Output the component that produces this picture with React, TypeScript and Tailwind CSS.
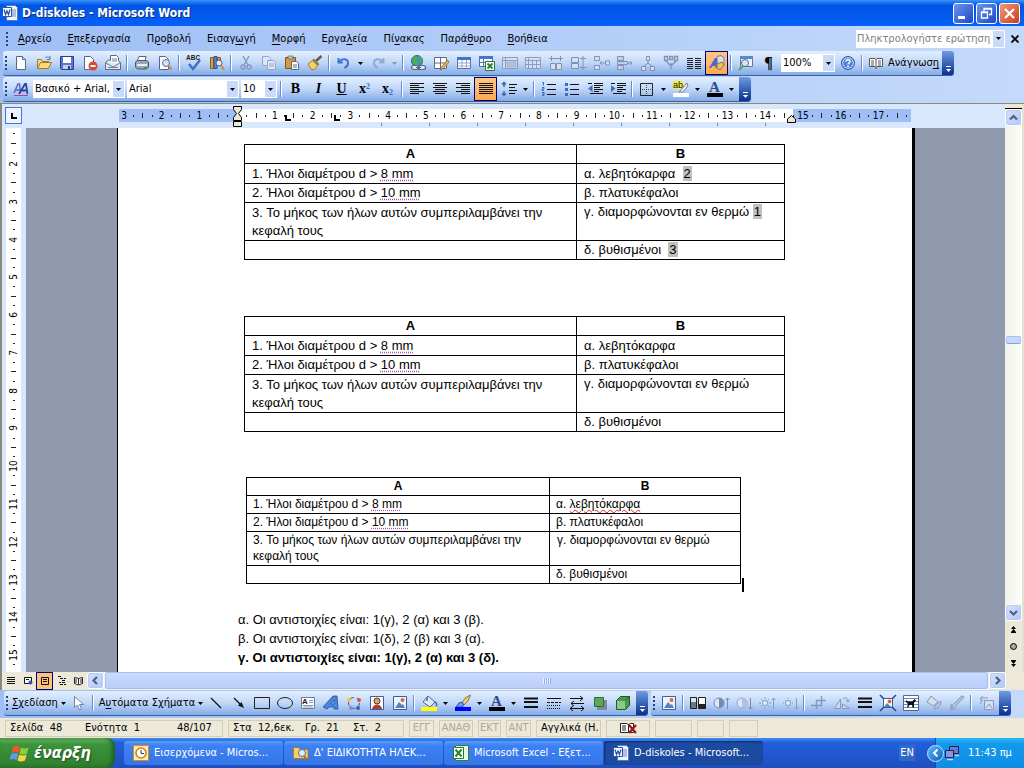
import { ReactNode } from "react";

const icons: Record<string, ReactNode> = {
  newDoc: <><path d="M3.5 1.5h6l3 3v10h-9z" fill="#fff" stroke="#53688f" /><path d="M9.5 1.5v3h3" fill="#cfdcf2" stroke="#53688f" /></>,
  open: <><path d="M1.5 13.5v-9h4l1 2h6v3" fill="#f7d878" stroke="#a1792b" /><path d="M1.5 13.5l3-6h11l-3 6z" fill="#ffd873" stroke="#a1792b" /><path d="M9 3c2-2 4-1 5 1m0-3v3.500h-3" fill="none" stroke="#4b77b8" /></>,
  save: <><path d="M1.500 1.500h13v13h-12l-1-1z" fill="#5b74d3" stroke="#2a3c8e" /><path d="M4 2h8v6H4z" fill="#fff" /><path d="M4 10h8v4H4z" fill="#c5cfea" /><path d="M9 11h2v3H9z" fill="#2a3c8e" /></>,
  permission: <><path d="M2.500 1.500h6l3 3v10h-9z" fill="#fff" stroke="#53688f" /><circle cx="11" cy="11" r="4.500" fill="#d84a27" /><path d="M8.500 10h5v2h-5z" fill="#fff" /></>,
  mail: <><path d="M5.500 .500h6l2 2v6h-8z" fill="#fff" stroke="#5c6a84" /><path d="M.500 7.500l3-2.500h9l3 2.500v7H.500z" fill="#e2e8f2" stroke="#5c6a84" /><path d="M6 1h5l2 2v5H6z" fill="#fff" /><path d="M1 8l7 4 7-4M7 4h5M7 6h5M3 12.500h10" fill="none" stroke="#6c7c9c" /></>,
  print: <><path d="M5 1.500h7l-1 5H3z" fill="#fff" stroke="#52627f" /><path d="M1.500 7l2-1.500h9l2 1.500v5l-2 2h-9l-2-2z" fill="#9aa7b8" stroke="#4a566b" /><path d="M3 9h10v2H3z" fill="#e8edf4" /><path d="M10 12h3v2h-3z" fill="#3c9b3c" /></>,
  preview: <><path d="M2.500 1.500h6l3 3v10h-9z" fill="#fff" stroke="#53688f" /><circle cx="9" cy="8" r="3.500" fill="#cfe5f7" stroke="#5b6f90" /><path d="M11.500 10.500l3 4" stroke="#c9892d" strokeWidth="2" /></>,
  spell: <><text x="0" y="5" fontSize="6.500" fontWeight="700" fill="#222" fontFamily="Liberation Sans, sans-serif">ABC</text><path d="M3 9l4 5 7-9" fill="none" stroke="#3f6fd0" strokeWidth="2.500" /></>,
  research: <><path d="M1.500 2.500h3v11h-3zM8.500 2.500h3v8h-3z" fill="#d9a13a" stroke="#8b5a1a" /><path d="M5 1.500h3v12H5z" fill="#5c83c4" stroke="#30508e" /><circle cx="10" cy="8" r="3" fill="#dcecf9" stroke="#50617f" /><path d="M12 10.500l3 4" stroke="#c9892d" strokeWidth="2" /></>,
  cut: <path d="M5 1l5 9M11 1l-5 9M5 10a2 2 0 1 0 .1 4 2 2 0 0 0 0-4M11 10a2 2 0 1 0 .1 4 2 2 0 0 0 0-4" fill="none" stroke="#8397bd" strokeWidth="1.400" />,
  copy: <><path d="M1.500 1.500h6l2 2v7h-8z" fill="#dde6f5" stroke="#95a5c7" /><path d="M6.500 5.500h6l2 2v7h-8z" fill="#dde6f5" stroke="#95a5c7" /><path d="M8 9h5M8 11h5" stroke="#95a5c7" /></>,
  paste: <><path d="M1.500 2.500h10v11h-10z" fill="#d69a37" stroke="#80561a" /><path d="M4 1h5v3H4z" fill="#b9bfca" stroke="#555" strokeWidth=".6" /><path d="M7.500 6.500h5l2 2v6h-7z" fill="#fff" stroke="#52689a" /><path d="M9 10h4M9 12h4" stroke="#52689a" /></>,
  painter: <><path d="M14.500 1L9 6" stroke="#6f5a3c" strokeWidth="2.500" /><path d="M1 9l6-5 5 5-5 6-3-1z" fill="#f4cf62" stroke="#a47e2b" /><path d="M6 5l5 5" stroke="#7c7c7c" strokeWidth="2" /></>,
  undo: <path d="M2.500 3v4.500H7M3 7c3-4 9-3.500 9 1 0 2.500-1.500 4-3.500 5" fill="none" stroke="#3f72ce" strokeWidth="2" />,
  redo: <path d="M13.500 3v4.500H9M13 7C10 3 4 3.500 4 8c0 2.500 1.500 4 3.500 5" fill="none" stroke="#93a9d2" strokeWidth="2" />,
  link: <><circle cx="7" cy="6" r="5.500" fill="#3f8bd8" stroke="#2c609e" /><path d="M3 2c3-2 5 0 4 2s2 3 1 6C4 11 1 7 3 2M9 1c3 1 5 5 2 7-2-1-3-4-2-7" fill="#4cb04a" /><path d="M3.500 10.500h4a2 2 0 0 1 0 4h-4a2 2 0 0 1 0-4M9.500 10.500h4a2 2 0 0 1 0 4h-4a2 2 0 0 1 0-4M6 12.500h5" fill="#dfe5ef" stroke="#56688c" strokeWidth="1.200" /></>,
  drawTable: <><path d="M1.500 2.500h12v11h-12zM7.500 2.500v11M1.500 8h12" fill="#fff" stroke="#5a6b8c" /><path d="M14.500 5l-6 7-1 3 3-1.500 5.500-6.500z" fill="#e9b54d" stroke="#935f20" strokeWidth=".8" /></>,
  table: <><path d="M1.500 2.500h13v11h-13z" fill="#fff" stroke="#4d6eb0" /><path d="M1 2h14v3H1z" fill="#4874c8" /><path d="M1.500 8h13M1.500 11h13M6 5v8.500M10.500 5v8.500" stroke="#93aad6" /></>,
  excelTable: <><path d="M.500 1.500h13v10H.500z" fill="#fff" stroke="#4d6eb0" /><path d="M0 1h14v3H0zM0 7h14v1H0zM4 4h1v8H4z" fill="#4874c8" /><path d="M6.500 6.500h9v9h-9z" fill="#fff" stroke="#2a7530" /><path d="M8.500 8.500l5 5m0-5l-5 5" stroke="#23892c" strokeWidth="2" /></>,
  gTable: <><path d="M.500 2.500h15v11H.500zM.500 5.500h15M3.500 2.500v11" fill="#d5dff0" stroke="#8b9cc0" /><path d="M5 7h9v5H5z" fill="#b4c1da" stroke="#8b9cc0" strokeWidth=".6" /></>,
  gGrid: <path d="M.500 2.500h15v11H.500zM.500 5.500h15M.500 9.500h15M3.500 2.500v11M7.500 5.500v8M11.500 5.500v8" fill="#d5dff0" stroke="#8b9cc0" />,
  gCols: <path d="M1 3.500h14M3.500 1v5M12.500 1v5M2.500 8.500h5v6h-5zM8.500 8.500h5v6h-5z" fill="#d5dff0" stroke="#8091b8" />,
  gRows: <path d="M.500 2.500h7v5h-7zM.500 8.500h7v5h-7zM12 1v14M9 3.500h6M9 12.500h6" fill="#d5dff0" stroke="#8091b8" />,
  gInsert: <path d="M.500 1.500h5v4h-5zM.500 10.500h5v4h-5zM11.500 6h4v4h-4zM6 8h5M8 6L6 8l2 2" fill="#d5dff0" stroke="#8091b8" />,
  gDelete: <path d="M.500 1.500h6v4h-6zM.500 10.500h6v4h-6zM.500 6.500h10v3H.500zM10 8h5M13 6l2 2-2 2" fill="#c3d0e8" stroke="#8091b8" />,
  gSplit: <path d="M6.500 1.500h3v4h-3zM8 6v3M8 8l-4 3M8 8l4 3M1.500 11.500h4v4h-4zM10.500 11.500h4v4h-4z" fill="#d5dff0" stroke="#8091b8" />,
  gMerge: <path d="M1.500 1.500h3v4h-3zM11.500 1.500h3v4h-3zM6.500 1.500h3v3h-3zM8 14V8M3 6l5 5 5-5" fill="none" stroke="#8091b8" strokeWidth="1.300" />,
  columns: <path d="M1 3.500h6M1 5.500h6M1 7.500h6M1 9.500h6M1 11.500h6M1 13.500h6M9 3.500h6M9 5.500h6M9 7.500h6M9 9.500h6M9 11.500h6M9 13.500h6" stroke="#222" />,
  drawing: <><path d="M8 1.500l4-1 3 2v7l-3 2-4-1z" fill="#d8dce4" stroke="#73809b" /><path d="M0 13L6 3h2l1 10H6.500v-2h-3L2 13z" fill="#5763c9" /><path d="M8 9l5-2 2 3-4 5-3-2z" fill="#e1c765" stroke="#8a763a" /></>,
  docMap: <><path d="M2.500 1.500h12v10h-12z" fill="#eef3fb" stroke="#6a7896" /><path d="M2 1h13v3H2z" fill="#5b87cf" /><circle cx="7" cy="8" r="3.500" fill="#d6e8f7" stroke="#516686" /><path d="M5 11l-4 4" stroke="#58a34c" strokeWidth="2" /></>,
  help: <><circle cx="8" cy="8" r="6.500" fill="#4f80da" stroke="#2c55a8" /><circle cx="8" cy="8" r="5.300" fill="none" stroke="#d7e4fb" /><path d="M6 6.500C6 4 10 4 10 6.500 10 8 8 8 8 9.500M8 10.500v1.500" fill="none" stroke="#fff" strokeWidth="1.500" /></>,
  book: <><path d="M1.500 3.500h5.500l1 1 1-1h5.500v8h-5.500l-1 1-1-1h-5.500z" fill="#fff" stroke="#555" /><path d="M8 4v10M3 6h3M3 8h3M3 10h3M10 6h3M10 8h3M10 10h3" stroke="#555" /></>,
  styles: <><path d="M1 12L5 3h1.500l1 9M3 9h5" fill="none" stroke="#5b66c9" strokeWidth="1.500" /><path d="M6 13l6-10h1l1.500 10M8.500 9.500h5" fill="none" stroke="#32439f" strokeWidth="1.800" /><path d="M1 14.500h14" stroke="#b04a7c" /></>,
  left: <path d="M1 2.500h14M1 4.500h9M1 6.500h14M1 8.500h9M1 10.500h14M1 12.500h9" stroke="#111" />,
  center: <path d="M1 2.500h14M3 4.500h10M1 6.500h14M3 8.500h10M1 10.500h14M3 12.500h10" stroke="#111" />,
  right: <path d="M1 2.500h14M6 4.500h9M1 6.500h14M6 8.500h9M1 10.500h14M6 12.500h9" stroke="#111" />,
  justify: <path d="M1 2.500h14M1 4.500h14M1 6.500h14M1 8.500h14M1 10.500h14M1 12.500h14" stroke="#111" />,
  spacing: <><path d="M3 1v5M3 10v5M1 3.500L3 1.500l2 2M1 12.500l2 2 2-2" fill="none" stroke="#3f6bbf" strokeWidth="1.600" /><path d="M8 3.500h8M8 6.500h6M8 9.500h8M8 12.500h6" stroke="#111" /></>,
  numbers: <><path d="M1 1.500h1.500v3M1 6.500h2v1.500H1v1.500h2M1 11.500h2v3H1M1 13h2" fill="none" stroke="#3f6bbf" /><path d="M6 3.500h9M6 8.500h9M6 13.500h9" stroke="#111" /></>,
  bullets: <><path d="M1 2h3v3H1zM1 7h3v3H1zM1 12h3v3H1z" fill="#3f6bbf" /><path d="M6 3.500h9M6 8.500h9M6 13.500h9" stroke="#111" /></>,
  outdent: <><path d="M1 2.500h4M7 2.500h9M7 4.500h9M7 6.500h6M7 8.500h9M7 10.500h5M3 12.500h13" stroke="#111" /><path d="M5.500 4v7L1 7.500z" fill="#3f6bbf" /></>,
  indent: <><path d="M1 2.500h4M7 2.500h9M7 4.500h9M7 6.500h6M7 8.500h9M7 10.500h5M3 12.500h13" stroke="#111" /><path d="M1 4v7l4.500-3.500z" fill="#3f6bbf" /></>,
  border: <><path d="M1.500 2.500h12v12h-12z" fill="none" stroke="#222" /><path d="M7.500 4v9M3 8.500h9" stroke="#445" strokeDasharray="1 1" /></>,
  highlight: <><path d="M0 0h10v8H0z" fill="#f5ee3c" /><text x="0" y="7" fontSize="9" fill="#111" fontFamily="Liberation Sans, sans-serif">ab</text><path d="M14 2L8 9l-2 2h4l5-6z" fill="#e7edf7" stroke="#72809c" /><path d="M0 12h16v4H0z" fill="#fff" /></>,
  fontColor: <><text x="2" y="11" fontSize="15" fontWeight="700" fill="#2c4a8e" fontFamily="Liberation Serif, serif">A</text><path d="M0 12h16v4H0z" fill="#000" /></>,
  pointer: <path d="M4.500 1.500v11l3-2.500 2 5 2-1-2-4.500h4z" fill="#fff" stroke="#7084a8" />,
  line: <path d="M3 3l10 10" stroke="#111" strokeWidth="1.200" />,
  arrow: <><path d="M3 3l8 8" stroke="#111" strokeWidth="1.200" /><path d="M13 13l-6-2.500L10.500 7z" fill="#111" /></>,
  rect: <path d="M.500 2.500h15v11H.500z" fill="none" stroke="#222" />,
  oval: <ellipse cx="8" cy="8" rx="7.500" ry="5.500" fill="none" stroke="#222" />,
  textbox: <><path d="M1.500 2.500h13v11h-13z" fill="#fff" stroke="#6b7c9c" /><text x="2" y="9" fontSize="8" fontWeight="700" fill="#222" fontFamily="Liberation Sans, sans-serif">A</text><path d="M9 5.500h4M9 7.500h4M3 10.500h10M3 12h10" stroke="#6b7c9c" strokeWidth=".8" /></>,
  wordart: <path d="M0 12L10 1h4l1 13h-4v-2H6l-2 2zM8 9h3V5z" fill="#4a86dd" fillRule="evenodd" stroke="#22509d" strokeWidth=".8" />,
  diagram: <><circle cx="8" cy="8" r="5.500" fill="none" stroke="#41557f" strokeDasharray="4 3" /><circle cx="3" cy="5" r="2" fill="#f0c33f" /><circle cx="13" cy="5" r="2" fill="#de5436" /><circle cx="5" cy="13" r="2" fill="#8d8ac4" /><circle cx="12" cy="13" r="2" fill="#3561bd" /></>,
  clip: <><path d="M1.500 1.500h13v13h-13z" fill="#fff" stroke="#3d5f9f" /><circle cx="8" cy="6" r="3" fill="#e2a16d" stroke="#5e3b23" /><path d="M3 14c1-6 9-6 10 0z" fill="#b63b2f" /></>,
  picture: <><path d="M1.500 1.500h13v13h-13z" fill="#edf4ff" stroke="#3d5f9f" /><path d="M3 13l4-6 3 3 1-1 2 4z" fill="#5a7fbe" /><circle cx="10.500" cy="5" r="2" fill="#e0692e" /></>,
  fill: <><path d="M7 1l7 6-5 5-7-5z" fill="#dfe7f3" stroke="#53688f" /><path d="M6 6V2M14 7c2 1 2 3 1 4" fill="none" stroke="#3f6bbf" strokeWidth="1.500" /><path d="M0 12h16v4H0z" fill="#ff0" /></>,
  brush: <><path d="M15.500 0L10 3 7 8l2 2 4-4z" fill="#f0c873" stroke="#7c6338" strokeWidth=".8" /><path d="M7 7l-3 1-3 4h6l2-2z" fill="#6aa0e8" stroke="#2d5397" /><path d="M0 12h16v4H0z" fill="#00f" /></>,
  lineStyle: <path d="M1 3.500h14M1 7h14M1 12h14" stroke="#111" strokeWidth="2" />,
  dashStyle: <><path d="M1 3.500h14" stroke="#111" /><path d="M1 7.500h14" stroke="#111" strokeDasharray="3 1" /><path d="M1 10.500h14M1 13.500h14" stroke="#111" strokeDasharray="1 1" /></>,
  arrowStyle: <path d="M1 3.500h13M11 1l3 2.500L11 6M15 8.500H2M5 6L2 8.500 5 11M1 13.500h14M4 11l-3 2.500L4 16M12 11l3 2.500-3 2.500" fill="none" stroke="#111" />,
  shadow: <><path d="M5 5h10v10H5z" fill="#7f8b9c" /><path d="M2.500 2.500h9v9h-9z" fill="#5aa65a" stroke="#2e6f35" /></>,
  cube: <><path d="M1.500 5.500l4-4h9v9l-4 4h-9z" fill="#4b984b" stroke="#23582b" /><path d="M2 6h8v8H2z" fill="#8ccb87" /><path d="M10.500 5.500l4-4" stroke="#23582b" /></>,
  colorMode: <><path d="M.500 2.500h6v11h-6z" fill="#6b7788" stroke="#222" /><path d="M1 3h5v4H1z" fill="#dfe6ef" /><path d="M8.500 2.500h7v11h-7z" fill="#fff" stroke="#222" /><path d="M8 9h8v5H8z" fill="#222" /></>,
  contrastUp: <><circle cx="6" cy="8" r="5" fill="#dce6f6" stroke="#768bb5" /><path d="M6 3v10a5 5 0 0 0 0-10" fill="#768bb5" /><path d="M14.500 14V3M12.500 5l2-2 2 2" fill="none" stroke="#768bb5" /></>,
  contrastDown: <><circle cx="6" cy="8" r="5" fill="#dce6f6" stroke="#8fa3c8" /><path d="M6 3v10a5 5 0 0 0 0-10" fill="#b3c2dd" /><path d="M14.500 3v11M12.500 12l2 2 2-2" fill="none" stroke="#768bb5" /></>,
  sunUp: <><circle cx="6" cy="8" r="2.500" fill="#e5edf9" stroke="#8699bf" /><path d="M6 2v2M6 12v2M0 8h2M10 8h2M2 4l1.500 1.500M10 4L8.500 5.500M2 12l1.500-1.500M10 12l-1.500-1.500M14.500 14V3M12.500 5l2-2 2 2" fill="none" stroke="#8699bf" /></>,
  sunDown: <><circle cx="6" cy="8" r="2.500" fill="#e5edf9" stroke="#8699bf" /><path d="M6 3v1M6 12v1M1 8h1M10 8h1M3 5l.5.5M9 5l-.5.5M3 11l.5-.5M9 11l-.5-.5M14.500 3v11M12.500 12l2 2 2-2" fill="none" stroke="#8699bf" /></>,
  crop: <path d="M5.500 14V5.500H15M0 10.500h10.500V1" fill="none" stroke="#8699bf" strokeWidth="1.500" />,
  rotate: <path d="M6.500 4v9.500h-6zM8.500 9v4.500h7zM9 4c2-3 5-1 5 3M12 5l2 2 1.500-2.500" fill="#cdd9ed" stroke="#8699bf" />,
  compress: <><path d="M3.500 3.500h9v9h-9z" fill="#fff" stroke="#3d5f9f" /><path d="M4 12l3-4 2 2 3 2z" fill="#5a7fbe" /><circle cx="9.500" cy="6.500" r="2" fill="#e0692e" /><path d="M0 0l4 4M16 0l-4 4M0 16l4-4M16 16l-4-4" stroke="#2a4b94" strokeWidth="1.600" /></>,
  wrap: <><path d="M.500 .500h15v15H.500z" fill="#fff" stroke="#55698f" /><path d="M1 3.500h14M1 6.500h14M1 9.500h14M1 12.500h14" stroke="#7088b4" /><path d="M3 5l2 1.500h4L11.500 4 13 5.500 11 8v4.500H9.500L9 10H6.500L5 12.500H4L5 9 3 7z" fill="#111" /></>,
  gFill: <><path d="M5 1l7 6-5 4-6-4z" fill="#d5dff0" stroke="#8699bf" /><path d="M15 6c0 4-3 8-7 8 1-4 3-6 7-8" fill="#b9c7e0" stroke="#8699bf" /></>,
  gPen: <path d="M15 2L6 11l-4 3 2-5M15 2l-2-1-8 8M2 9v5h5" fill="#d5dff0" stroke="#8fa2c6" strokeWidth="1.300" />,
  reset: <><path d="M6.500 5.500h9v9h-9z" fill="#d5dff0" stroke="#8699bf" /><path d="M8 13l3-4 3 4M10 3H3M5 1L2 3.500 5 6M3 4v5" fill="none" stroke="#8699bf" /></>,
  word: <><path d="M4.500 .500h9l2 2v13h-11z" fill="#eef4ff" stroke="#5677b9" /><path d="M10 5h4M10 7h4M10 9h4M10 11h4" stroke="#6f8dc8" /><path d="M.500 2.500h9v9h-9z" fill="#fff" stroke="#2a55a8" /><path d="M2 4.500l1.500 5L5 6l1.500 3.500 1.500-5" fill="none" stroke="#2a55a8" strokeWidth="1.300" /></>,
  outlook: <><path d="M.500 .500h15v15H.500z" fill="#ffe9b0" stroke="#d38c1c" /><circle cx="8" cy="8" r="5" fill="#fff" stroke="#c78320" strokeWidth="1.600" /><path d="M8 5v3.500h3" fill="none" stroke="#333" /></>,
  folder: <><path d="M.500 13.500v-11h5l1.500 2h8v9z" fill="#f7cf61" stroke="#b17d1c" /><circle cx="9" cy="8" r="3.500" fill="#dceefb" stroke="#496fa5" /><path d="M11 11l3 4" stroke="#a96d26" strokeWidth="2" /></>,
  excel: <><path d="M2.500 .500h13v15h-13z" fill="#e6f4e4" stroke="#387d3c" /><path d="M.500 2.500h10v11H.500z" fill="#fff" stroke="#257a2c" /><path d="M2.500 4.500l6 7m0-7l-6 7" stroke="#1e8a2a" strokeWidth="2" /></>,
  normalView: <path d="M4 4.500h8M4 6.500h8M4 8.500h8M4 10.500h8" stroke="#111" />,
  webView: <><path d="M4.500 4.500h7v6h-7z" fill="#fff" stroke="#111" /><circle cx="10.500" cy="9.500" r="2" fill="#3456b8" /><path d="M6 6.500h3" stroke="#111" /></>,
  printView: <path d="M4.500 4.500h7v7h-7zM6 6.500h4M6 8.500h4" fill="none" stroke="#111" />,
  outlineView: <path d="M4 3.500h4M6 5.500h6M8 7.500h4M5 9.500h2M8 9.500h4M6 11.500h6" stroke="#111" strokeDasharray="3 1" />,
  readView: <path d="M3.500 4.500l4 1 4-1v6l-4 1.500-4-1.500zM7.500 5.500v6M4 7h2M9 7h2M4 9h2M9 9h2" fill="#fff" stroke="#222" />,
  spellStatus: <><path d="M.500 3.500h6l2 1v8h-8zM8.500 4.500l2-1h3v9h-5z" fill="#fff" stroke="#222" /><path d="M2 6h4M2 8h4M2 10h4" stroke="#222" /><path d="M9 5l7 8M16 5l-7 8" stroke="#a3161b" strokeWidth="2.400" /></>,
  network: <><path d="M5.500 1.500h9v7h-9z" fill="#6a79d6" stroke="#20244f" /><path d="M1.500 5.500h8v7h-8z" fill="#8794e8" stroke="#20244f" /><path d="M3 14.500h6M11 10.500h4" stroke="#cfd4ea" strokeWidth="1.500" /></>,
};

const Icon = ({ name }: { name: string }) => (
  <svg viewBox="0 0 16 16" className="size-4 shrink-0 overflow-visible" aria-hidden="true">{icons[name]}</svg>
);

const Tri = ({ dim = false }: { dim?: boolean }) => (
  <svg viewBox="0 0 5 3" className={dim ? "h-[3px] w-[5px] text-[#8a94a8]" : "h-[3px] w-[5px]"} aria-hidden="true">
    <path d="M0 0h5L2.500 3z" fill="currentColor" />
  </svg>
);

// "Αρ_χείο" style markup: the letter after "_" is the accelerator
const Label = ({ text }: { text: string }) => {
  const [before, rest = ""] = text.split("_");
  return (
    <span className="whitespace-nowrap">
      {before}
      <span className="underline underline-offset-2">{rest.slice(0, 1)}</span>
      {rest.slice(1)}
    </span>
  );
};

const Grip = () => (
  <span className="flex w-[6px] shrink-0 flex-col items-center justify-center gap-[2px]">
    {[0, 1, 2, 3].map((n) => (
      <span key={n} className="size-[2px] bg-[#27418a]" />
    ))}
  </span>
);

const Sep = () => (
  <span className="flex w-[6px] shrink-0 items-center justify-center">
    <span className="h-4 w-[2px] border-r border-white bg-[#6a8ccb]" />
  </span>
);

const EndCap = () => (
  <button aria-label="Επιλογές" className="flex w-3 shrink-0 flex-col items-center justify-end gap-[2px] rounded-r-[3px] bg-gradient-to-b from-[#6f9be3] to-[#0a2f8d] pb-[3px] text-white">
    <span className="h-px w-[5px] bg-white" />
    <Tri />
  </button>
);

const Tool = ({ name, on = false }: { name: string; on?: boolean }) => (
  <button
    aria-label={name}
    className={
      on
        ? "flex w-[23px] shrink-0 items-center justify-center border border-[#000080] bg-gradient-to-b from-[#ffc583] to-[#ffa94d]"
        : "flex w-[23px] shrink-0 items-center justify-center"
    }
  >
    <Icon name={name} />
  </button>
);

const Drop = ({ dim = false }: { dim?: boolean }) => (
  <button aria-label="Περισσότερα" className="flex w-[11px] shrink-0 items-center justify-center">
    <Tri dim={dim} />
  </button>
);

const Glyph = ({ text, label, className }: { text: ReactNode; label: string; className: string }) => (
  <button aria-label={label} className={`w-[23px] shrink-0 text-center font-['Liberation_Serif',serif] leading-6 ${className}`}>
    {text}
  </button>
);

const Combo = ({ value, label, width }: { value: string; label: string; width: string }) => (
  <span className={`relative mx-px my-[3px] flex shrink-0 bg-white ${width}`}>
    <select aria-label={label} className="w-full appearance-none bg-transparent pr-3 pl-[2px] text-[11px]">
      <option>{value}</option>
    </select>
    <span className="pointer-events-none absolute inset-y-px right-px flex w-[11px] items-center justify-center bg-[#c8dafa]">
      <Tri />
    </span>
  </span>
);

// "|" separator, "v" drop arrow, "w" greyed drop arrow
const Tools = ({ items }: { items: string[] }) => (
  <>
    {items.map((item, i) => {
      if (item === "|") return <Sep key={i} />;
      if (item === "v" || item === "w") return <Drop key={i} dim={item === "w"} />;
      return <Tool key={i} name={item.replace("*", "")} on={item.endsWith("*")} />;
    })}
  </>
);

const Toolbar = ({ children }: { children: ReactNode }) => (
  <div className="flex h-[25px] shrink-0 rounded-[3px] border-b border-[#3b619c] bg-gradient-to-b from-[#e3effe] via-[#c0d7f8] to-[#83abe6]">
    {children}
    <EndCap />
  </div>
);

const standardTools = [
  "newDoc", "open", "save", "permission", "mail", "|", "print", "preview", "|", "spell", "research", "|",
  "cut", "copy", "paste", "painter", "|", "undo", "v", "redo", "w", "|",
  "link", "drawTable", "table", "excelTable", "gTable", "gGrid", "gCols", "gRows", "gInsert", "gDelete",
  "gSplit", "gMerge", "columns", "drawing*", "|", "docMap",
];

const menus = ["_Αρχείο", "_Επεξεργασία", "Π_ροβολή", "Εισαγ_ωγή", "_Μορφή", "Εργα_λεία", "Πί_νακας", "Παρά_θυρο", "_Βοήθεια"];

const TitleBar = () => (
  <header className="flex h-[26px] shrink-0 items-center gap-1 bg-gradient-to-b from-[#3a93ff] via-[#0054e3] via-20% to-[#0660fa] pr-1 pl-[2px]">
    <Icon name="word" />
    <h1 className="flex-1 font-['DejaVu_Sans_Condensed','DejaVu_Sans',sans-serif] text-[12px] font-bold text-white [text-shadow:1px_1px_#0f2b7a]">
      D-diskoles - Microsoft Word
    </h1>
    <div className="flex gap-[2px]">
      <button aria-label="Ελαχιστοποίηση" className="size-[21px] rounded-[3px] border border-white bg-gradient-to-br from-[#6d94f0] to-[#1b46c6]">
        <svg viewBox="0 0 19 19"><path d="M4 12h7v3H4z" fill="#fff" /></svg>
      </button>
      <button aria-label="Επαναφορά" className="size-[21px] rounded-[3px] border border-white bg-gradient-to-br from-[#6d94f0] to-[#1b46c6]">
        <svg viewBox="0 0 19 19"><path d="M7 7V4.500h7.500v6H12M4.500 8h6v6h-6zM4 8.500h7M7 5h7" fill="none" stroke="#fff" strokeWidth="1.300" /></svg>
      </button>
      <button aria-label="Κλείσιμο" className="size-[21px] rounded-[3px] border border-white bg-gradient-to-br from-[#f0977a] to-[#cc3810]">
        <svg viewBox="0 0 19 19"><path d="M5 5l9 9M14 5l-9 9" stroke="#fff" strokeWidth="2.200" /></svg>
      </button>
    </div>
  </header>
);

const MenuBar = () => (
  <nav className="flex h-[25px] shrink-0 items-center pl-1">
    <span className="flex h-full"><Grip /></span>
    {menus.map((menu) => (
      <button key={menu} className="px-2">
        <Label text={menu} />
      </button>
    ))}
    <label className="ml-auto flex h-[18px] bg-white">
      <input aria-label="Ερώτηση" placeholder="Πληκτρολογήστε ερώτηση" className="w-[137px] pl-px text-[11px] placeholder:text-[#808080]" />
      <span className="my-px mr-px flex w-[11px] items-center justify-center bg-[#c8dafa]"><Tri /></span>
    </label>
    <button aria-label="Κλείσιμο εγγράφου" className="flex w-[19px] justify-center">
      <svg viewBox="0 0 8 8" className="size-2"><path d="M.500 .500l7 7m0-7l-7 7" stroke="#000" strokeWidth="1.800" /></svg>
    </button>
  </nav>
);

const Marks = ({ vertical = false }: { vertical?: boolean }) => {
  const cell = "flex flex-1 items-center justify-center";
  return (
    <>
      <span className={cell}><span className={vertical ? "h-px w-[2px] bg-[#222]" : "h-[2px] w-px bg-[#222]"} /></span>
      <span className={cell}><span className={vertical ? "h-px w-[5px] bg-[#222]" : "h-[5px] w-px bg-[#222]"} /></span>
      <span className={cell}><span className={vertical ? "h-px w-[2px] bg-[#222]" : "h-[2px] w-px bg-[#222]"} /></span>
    </>
  );
};

const rulerNumbers = [3, 2, 1, 0, ...Array.from({ length: 17 }, (_, i) => i + 1)];

const TabStop = () => (
  <svg viewBox="0 0 6 6" className="size-[6px]"><path d="M1 0v5h5" fill="none" stroke="#000" strokeWidth="2" /></svg>
);

const HRuler = () => (
  <div className="flex h-6 shrink-0 bg-[#d8e7fc] pl-[3px]">
    <button aria-label="Στηλοθέτης" className="mt-[3px] flex size-[17px] shrink-0 items-center justify-center border border-[#4874cf] bg-[#edf4ff]">
      <TabStop />
    </button>
    <div className="relative mt-[5px] ml-[97px] flex h-[13px] w-[792px] shrink-0">
      <div className="absolute inset-0 flex">
        <span className="w-[118px] bg-[#9ebef5]" />
        <span className="flex-1 bg-white" />
        <span className="w-[118px] bg-[#9ebef5]" />
      </div>
      <div className="relative flex flex-1 text-[10px] leading-[13px]">
        {rulerNumbers.map((n, i) => (
          <span key={i} className="flex min-w-0 flex-1">
            <span className="flex w-[10px] shrink-0 justify-center">{n || ""}</span>
            <Marks />
          </span>
        ))}
      </div>
      {/* default tab positions */}
      <div className="absolute top-[14px] left-[262px] flex gap-[47px]">
        {Array.from({ length: 9 }, (_, i) => (
          <span key={i} className="h-[3px] w-px bg-[#7c8799]" />
        ))}
      </div>
      <svg viewBox="0 0 9 22" className="absolute -top-[3px] left-[114px] h-[22px] w-[9px]">
        <path d="M.500 .500h8v3l-3 4 3 4v3h-8v-3l3-4-3-4zM.500 15.500h8v5h-8z" fill="#ece9d8" stroke="#000" />
      </svg>
      <span className="absolute top-[6px] left-[166px]"><TabStop /></span>
      <span className="absolute top-[6px] left-[215px]"><TabStop /></span>
      <svg viewBox="0 0 9 8" className="absolute top-[6px] left-[668px] h-2 w-[9px]">
        <path d="M.500 7.500V4l4-3.500L8.500 4v3.500z" fill="#ece9d8" stroke="#000" />
      </svg>
    </div>
  </div>
);

const VRuler = () => (
  <div className="w-6 shrink-0 bg-[#d8e7fc] pr-[5px] pl-1">
    <div className="flex flex-col bg-white text-[10px]">
      <div className="flex h-[31px] shrink-0 flex-col"><Marks vertical /></div>
      <div className="flex h-[529px] shrink-0 flex-col">
        {Array.from({ length: 14 }, (_, i) => (
          <span key={i} className="flex min-h-0 flex-1 flex-col">
            <span className="flex h-[10px] shrink-0 items-center justify-center">
              <span className="-rotate-90">{i + 2}</span>
            </span>
            <Marks vertical />
          </span>
        ))}
      </div>
    </div>
  </div>
);

const Units = ({ children }: { children: string }) => (
  <span className="underline decoration-[#b04fc4] decoration-dotted underline-offset-2">{children}</span>
);

const Mark = ({ children }: { children: string }) => <mark className="bg-[#c0c0c0] px-px text-black">{children}</mark>;

type MatchTableProps = { small?: boolean; answers?: string[]; className: string };

const MatchTable = ({ small = false, answers, className }: MatchTableProps) => {
  const cell = small ? "border border-black px-[6px] align-top" : "border border-black px-[7px] align-bottom";
  const row = small ? "h-[18px]" : "h-[19px]";
  return (
    <table className={`table-fixed border-collapse ${className}`}>
      <colgroup>
        <col className={small ? "w-[303px]" : "w-[332px]"} />
        <col />
      </colgroup>
      <thead>
        <tr className={row}>
          <th className={cell}>A</th>
          <th className={cell}>B</th>
        </tr>
      </thead>
      <tbody>
        <tr className={small ? row : "h-5"}>
          <td className={cell}>1. Ήλοι διαμέτρου d &gt; <Units>8 mm</Units></td>
          <td className={cell}>
            α. {small ? <span className="underline decoration-[#e02020] decoration-wavy decoration-1">λεβητόκαρφα</span> : "λεβητόκαρφα"}
            {answers && <>&nbsp; <Mark>{answers[0]}</Mark></>}
          </td>
        </tr>
        <tr className={row}>
          <td className={cell}>2. Ήλοι διαμέτρου d &gt; <Units>10 mm</Units></td>
          <td className={cell}>β. πλατυκέφαλοι</td>
        </tr>
        <tr className={small ? "h-[34px]" : "h-[38px]"}>
          <td className={cell}>3. Το μήκος των ήλων αυτών συμπεριλαμβάνει την {small && <br />}κεφαλή τους</td>
          <td className="border border-black px-[7px] align-top">γ. διαμορφώνονται εν θερμώ {answers && <Mark>{answers[1]}</Mark>}</td>
        </tr>
        <tr className={row}>
          <td className={cell}></td>
          <td className={cell}>δ. βυθισμένοι {answers && <>&nbsp;<Mark>{answers[2]}</Mark></>}</td>
        </tr>
      </tbody>
    </table>
  );
};

const Page = () => (
  <article className="ml-[91px] w-[798px] shrink-0 border-r-[3px] border-l border-black bg-white pt-4 pl-[120px] font-['Liberation_Sans',Arial,sans-serif] text-[13px] leading-[18px]">
    <MatchTable className="ml-[6px] w-[541px]" answers={["2", "1", "3"]} />
    <MatchTable className="mt-14 ml-[6px] w-[541px]" />
    <div className="mt-[45px] ml-2 flex items-end gap-px">
      <MatchTable className="w-[495px] text-[12px] leading-4" small />
      <span className="-mb-2 h-[14px] w-[2px] bg-black" />
    </div>
    <div className="mt-[26px] leading-[19px]">
      <p>α. Οι αντιστοιχίες είναι: 1(γ), 2 (α) και 3 (β).</p>
      <p>β. Οι αντιστοιχίες είναι: 1(δ), 2 (β) και 3 (α).</p>
      <p className="font-bold">γ. Οι αντιστοιχίες είναι: 1(γ), 2 (α) και 3 (δ).</p>
    </div>
  </article>
);

const ScrollButton = ({ label, d }: { label: string; d: string }) => (
  <button aria-label={label} className="flex size-[17px] shrink-0 items-center justify-center rounded-[3px] border border-white bg-gradient-to-br from-[#d5e1fe] to-[#b3c8f7] shadow-[inset_0_0_0_1px_#b5c9f3]">
    <svg viewBox="0 0 9 9" className="size-[9px]"><path d={d} fill="none" stroke="#4d6185" strokeWidth="2.200" /></svg>
  </button>
);

const VScroll = () => (
  <div className="flex w-[19px] shrink-0 flex-col border-r-[2px] border-[#e4e1d2] bg-[#ece9d8]">
    <span className="h-[5px] border-b border-black bg-[#ece9d8]" />
    <ScrollButton label="Επάνω" d="M1 6.500L4.500 3 8 6.500" />
    <div className="flex-1 bg-gradient-to-r from-[#f1f0e9] to-[#fefefb]">
      <div className="h-[44%]" />
      <div className="mx-px h-2 rounded-[2px] border border-[#a9c0f2] border-b-[#7fa0e4] bg-[#c6d6fc]" />
    </div>
    <ScrollButton label="Κάτω" d="M1 3L4.500 6.500 8 3" />
    <div className="flex h-[51px] shrink-0 flex-col items-center justify-around">
      <svg viewBox="0 0 7 7" className="size-[7px]"><path d="M3.500 0L6 3H1zM3.500 3L6 6H1zM1 6h5v1H1z" /></svg>
      <span className="size-[7px] rounded-full border border-black bg-[#a9a99c]" />
      <svg viewBox="0 0 7 7" className="size-[7px]"><path d="M3.500 7L6 4H1zM3.500 4L6 1H1zM1 0h5v1H1z" /></svg>
    </div>
  </div>
);

const ViewBar = () => (
  <div className="flex h-[18px] shrink-0 bg-[#ece9d8] pr-[18px]">
    <div className="flex w-[85px] shrink-0 pr-px">
      {["normalView", "webView", "printView", "outlineView", "readView"].map((view) => (
        <button
          key={view}
          aria-label={view}
          className={
            view === "printView"
              ? "flex w-[17px] shrink-0 items-center justify-center border border-[#000080] bg-[#ffc177]"
              : "flex w-[17px] shrink-0 items-center justify-center"
          }
        >
          <Icon name={view} />
        </button>
      ))}
    </div>
    <ScrollButton label="Αριστερά" d="M6 1L2.500 4.500 6 8" />
    <div className="flex flex-1 bg-[#f5f4ee] px-px pb-px">
      <div className="flex flex-1 items-center justify-center gap-px rounded-[2px] border border-[#a4bdf0] bg-gradient-to-b from-[#cbdafd] to-[#bacefa]">
        {[0, 1, 2, 3].map((n) => (
          <span key={n} className="h-[6px] w-px bg-[#eef4fe] shadow-[1px_0_#8cb0f8]" />
        ))}
      </div>
    </div>
    <ScrollButton label="Δεξιά" d="M3 1l3.500 3.500L3 8" />
  </div>
);

const DrawingBars = () => (
  <div className="flex h-7 shrink-0 gap-[3px] bg-gradient-to-r from-[#9ebef5] to-[#c4dafa] pt-px pl-1">
    <Toolbar>
      <Grip />
      <button className="flex items-center gap-[3px] pr-px pl-[2px]"><Label text="_Σχεδίαση" /><Tri /></button>
      <Tools items={["pointer", "|"]} />
      <button className="flex items-center gap-[3px] pr-px pl-[3px]"><Label text="Α_υτόματα Σχήματα" /><Tri /></button>
      <Tools
        items={["line", "arrow", "rect", "oval", "textbox", "wordart", "diagram", "clip", "picture", "|", "fill", "v", "brush", "v", "fontColor", "v", "lineStyle", "dashStyle", "arrowStyle", "shadow", "cube"]}
      />
      <span className="w-[2px]" />
    </Toolbar>
    <Toolbar>
      <Grip />
      <Tools
        items={["picture", "|", "colorMode", "contrastUp", "contrastDown", "sunUp", "sunDown", "|", "crop", "rotate", "lineStyle", "compress", "wrap", "gFill", "gPen", "|", "reset"]}
      />
      <span className="w-[2px]" />
    </Toolbar>
  </div>
);

const panel = "flex h-[17px] items-center border border-[#d2cebb] px-1";

const StatusBar = () => (
  <footer className="flex h-5 shrink-0 items-center gap-[5px] bg-[#ece9d8] pl-[5px] whitespace-nowrap">
    <div className={`${panel} w-[218px]`}>
      <span className="w-[75px]">Σελίδα&nbsp; 48</span>
      <span className="w-[92px]">Ενότητα&nbsp; 1</span>
      <span>48/107</span>
    </div>
    <div className={`${panel} w-[176px]`}>
      <span className="w-[72px]">Στα&nbsp; 12,6εκ.</span>
      <span className="w-12">Γρ.&nbsp; 21</span>
      <span>Στ.&nbsp; 2</span>
    </div>
    <div className="flex gap-[5px] text-[#aca899]">
      <span className={`${panel} w-[25px] justify-center`}>ΕΓΓ</span>
      <span className={`${panel} w-[34px] justify-center`}>ΑΝΑΘ</span>
      <span className={`${panel} w-[23px] justify-center`}>ΕΚΤ</span>
      <span className={`${panel} w-[25px] justify-center`}>ΑΝΤ</span>
    </div>
    <span className={`${panel} w-[65px]`}>Αγγλικά (Η.</span>
    <span className={`${panel} w-11 justify-center`}><Icon name="spellStatus" /></span>
    <span className={`${panel} w-[37px]`} />
    <span className={`${panel} w-[27px]`} />
    <span className={`${panel} w-[29px]`} />
  </footer>
);

const tasks = [
  { icon: "outlook", title: "Εισερχόμενα - Micros..." },
  { icon: "folder", title: "Δ' ΕΙΔΙΚΟΤΗΤΑ ΗΛΕΚ..." },
  { icon: "excel", title: "Microsoft Excel - Εξετ..." },
  { icon: "word", title: "D-diskoles - Microsoft...", active: true },
];

const Taskbar = () => (
  <div className="flex h-[30px] shrink-0 bg-gradient-to-b from-[#3f8cf3] via-[#245edb] via-15% to-[#1d4fc0] text-white">
    <button className="flex w-[115px] shrink-0 items-center gap-1 rounded-r-lg bg-gradient-to-b from-[#6fbf6c] via-[#3c943c] via-20% to-[#2f7f2f] pl-[10px] shadow-[inset_-3px_0_4px_#1f5f20]">
      <svg viewBox="0 0 20 18" className="h-[18px] w-5 shrink-0">
        <path d="M3 3q4-2.500 7 0L8.500 9q-4-2-7 0z" fill="#f0562c" />
        <path d="M11 3.500q4 2 7.500 0L17 9.500q-4 2-7.500 0z" fill="#8cd13c" />
        <path d="M1.200 10q3.500-2 7 0L6.500 16q-3.500-2-7 0z" fill="#5b9bf5" />
        <path d="M9.200 10.500q4 2 7.500 0L15 16.500q-4 2-7.500 0z" fill="#fbd33c" />
      </svg>
      <span className="text-[16px] leading-6 font-bold italic [text-shadow:1px_1px_2px_#1b4d1c]">έναρξη</span>
    </button>
    <div className="ml-[9px] flex min-w-0 flex-1 gap-px py-[3px] pr-32">
      {tasks.map((task) => (
        <button
          key={task.title}
          className={
            task.active
              ? "flex min-w-0 max-w-[159px] flex-1 items-center gap-[5px] rounded-[3px] bg-[#1b4a9f] px-[9px] whitespace-nowrap shadow-[inset_1px_1px_2px_#102f70]"
              : "flex min-w-0 max-w-[159px] flex-1 items-center gap-[5px] rounded-[3px] bg-gradient-to-b from-[#5a9bfa] via-[#3c81f3] via-20% to-[#3575e8] px-[9px] whitespace-nowrap"
          }
        >
          <Icon name={task.icon} />
          <span>{task.title}</span>
        </button>
      ))}
    </div>
    <button className="my-auto mr-[5px] h-4 w-4 shrink-0 bg-[#316ac5] text-center">EN</button>
    <div className="ml-[15px] flex w-[89px] shrink-0 items-center border-l border-[#0b4fae] bg-gradient-to-b from-[#2bb4f5] via-[#119aec] via-20% to-[#0f8de4]">
      <button aria-label="Εμφάνιση εικονιδίων" className="-ml-[9px] flex size-[17px] shrink-0 items-center justify-center rounded-full border border-[#bfe6ff] bg-gradient-to-br from-[#57b8f5] to-[#0d5fc4]">
        <svg viewBox="0 0 8 8" className="size-2"><path d="M5.500 0.500L2 4l3.500 3.500" fill="none" stroke="#fff" strokeWidth="2" /></svg>
      </button>
      <Icon name="network" />
      <span className="ml-2 whitespace-nowrap">11:43 πμ</span>
    </div>
  </div>
);

export default function App() {
  return (
    <div className="flex h-screen flex-col overflow-hidden bg-[#ece9d8] font-['DejaVu_Sans_Condensed','DejaVu_Sans',sans-serif] text-[11px] leading-[14px] text-black">
      <TitleBar />
      <div className="flex h-[77px] shrink-0 flex-col bg-gradient-to-r from-[#9ebef5] to-[#c4dafa]">
        <MenuBar />
        <div className="flex flex-col items-start gap-px pl-[3px]">
          <Toolbar>
            <Grip />
            <Tools items={standardTools} />
            <Glyph text="¶" label="Εμφάνιση όλων" className="text-base font-bold" />
            <Combo value="100%" label="Ζουμ" width="w-[54px]" />
            <Tools items={["help", "|"]} />
            <button className="flex items-center gap-1 px-[3px]"><Icon name="book" /><Label text="Ανάγνωσ_η" /></button>
          </Toolbar>
          <Toolbar>
            <Grip />
            <Tool name="styles" />
            <Combo value="Βασικό + Arial," label="Στυλ" width="w-[92px]" />
            <Combo value="Arial" label="Γραμματοσειρά" width="w-[112px]" />
            <Combo value="10" label="Μέγεθος" width="w-9" />
            <Sep />
            <Glyph text="B" label="Έντονα" className="text-sm font-bold" />
            <Glyph text="I" label="Πλάγια" className="text-sm font-bold italic" />
            <Glyph text="U" label="Υπογράμμιση" className="text-sm font-bold underline" />
            <Glyph text={<>x<sup className="text-[8px] text-[#3f6bbf]">2</sup></>} label="Εκθέτης" className="text-sm font-bold" />
            <Glyph text={<>x<sub className="text-[8px] text-[#3f6bbf]">2</sub></>} label="Δείκτης" className="text-sm font-bold" />
            <Tools
              items={["|", "left", "center", "right", "justify*", "spacing", "v", "|", "numbers", "bullets", "outdent", "indent", "|", "border", "v", "highlight", "v", "fontColor", "v"]}
            />
            <span className="w-[2px]" />
          </Toolbar>
        </div>
      </div>
      <main className="flex min-h-0 flex-1 flex-col border-t border-l-2 border-[#8d8a7c]">
        <div className="flex min-h-0 flex-1">
          <div className="flex min-w-0 flex-1 flex-col">
            <HRuler />
            <div className="flex min-h-0 flex-1 overflow-hidden">
              <VRuler />
              <div className="flex min-w-0 flex-1 overflow-hidden bg-[#9199ae]">
                <Page />
              </div>
            </div>
          </div>
          <VScroll />
        </div>
        <ViewBar />
      </main>
      <DrawingBars />
      <StatusBar />
      <Taskbar />
    </div>
  );
}
